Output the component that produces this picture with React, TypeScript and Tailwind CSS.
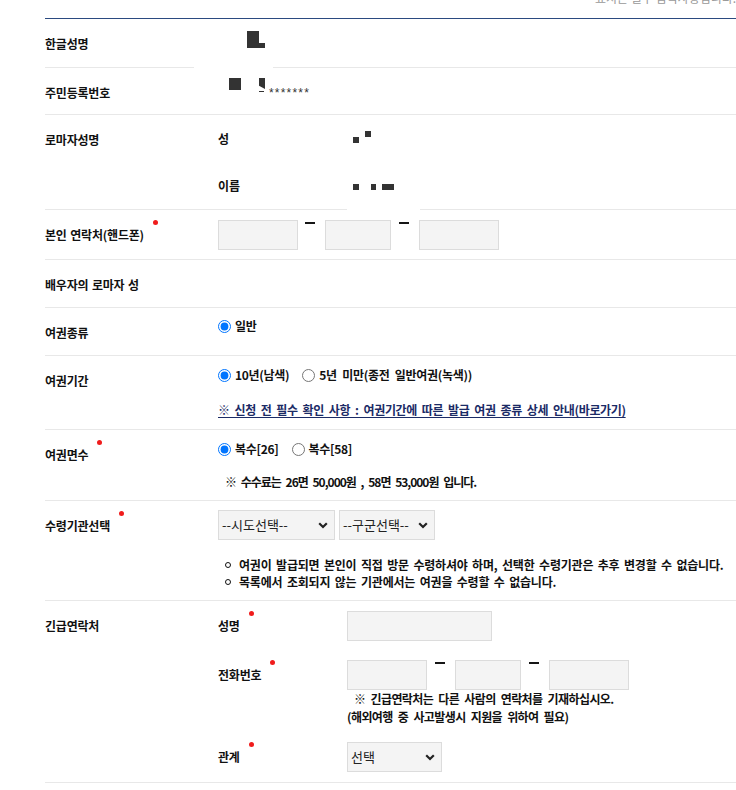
import React from "react";

const Dot = () => (
  <span className="absolute left-[calc(100%+9px)] top-[-7px] h-[5px] w-[5px] rounded-full bg-[#f01c1c]" />
);

function Label({ children, dot }: { children: React.ReactNode; dot?: boolean }) {
  return (
    <div className="w-[173px] shrink-0 pt-[16px]">
      <span className="relative inline-block leading-[16px] tracking-[-0.2px] [word-spacing:1px]">
        {children}
        {dot && <Dot />}
      </span>
    </div>
  );
}

function SubLabel({ children, dot }: { children: React.ReactNode; dot?: boolean }) {
  return (
    <div className="flex h-[30px] w-[129px] shrink-0 items-center">
      <span className="relative inline-block leading-[16px] tracking-[-0.2px]">
        {children}
        {dot && <Dot />}
      </span>
    </div>
  );
}

function Box({ w }: { w: string }) {
  return <div className={`h-[30px] shrink-0 border border-[#dcdcdc] bg-[#f4f4f4] ${w}`} />;
}

function Dash({ wide }: { wide?: boolean }) {
  return (
    <div className={wide ? "w-[28px] shrink-0 pl-[8px]" : "w-[27px] shrink-0 pl-[7px]"}>
      <div className="mt-[2px] h-[2px] w-[10px] bg-[#161616]" />
    </div>
  );
}

function Chevron() {
  return (
    <svg width="10" height="7" viewBox="0 0 10 7" className="shrink-0">
      <path d="M1.2 1.2 L5 5 L8.8 1.2" fill="none" stroke="#222" strokeWidth="2.2" />
    </svg>
  );
}

function Select({ text, w }: { text: string; w: string }) {
  return (
    <div
      className={`flex h-[30px] shrink-0 items-center justify-between border border-[#dcdcdc] bg-[#f4f4f4] pl-[3px] pr-[6px] text-[13px] font-normal tracking-normal text-[#222] [word-spacing:0px] ${w}`}
    >
      <span className="leading-[16px]">{text}</span>
      <Chevron />
    </div>
  );
}

function Radio({ name, checked, label }: { name: string; checked?: boolean; label: string }) {
  return (
    <label className="flex items-center">
      <input type="radio" name={name} defaultChecked={checked} className="m-0 h-[13px] w-[13px]" />
      <span className="ml-[4px] leading-[16px] tracking-[-0.3px]">{label}</span>
    </label>
  );
}

function Block({ c }: { c: string }) {
  return <div className={`shrink-0 bg-[#333] ${c}`} />;
}

export default function App() {
  return (
    <div className="h-[790px] w-[736px] overflow-hidden bg-white font-['Noto_Sans_CJK_KR',sans-serif] text-[12px] font-bold tracking-[0px] text-[#111] [word-spacing:3px]">
      <div className="h-[18px] overflow-hidden">
        <div className="mt-[-10px] whitespace-nowrap pl-[595px] text-[12px] font-normal leading-[16px] tracking-normal text-[#999] [word-spacing:0px]">
          표시는 필수 입력사항입니다.
        </div>
      </div>

      <div className="ml-[45px] border-t border-[#2b4a80]">
        {/* 한글성명 */}
        <div className="relative flex h-[49px] border-b border-[#e8e8e8]">
          <Label>한글성명</Label>
          <div className="flex items-end self-start pl-[29px] pt-[12px]">
            <Block c="h-[17px] w-[12px]" />
            <Block c="h-[5px] w-[6px]" />
          </div>
          <div className="absolute bottom-[-1px] left-[149px] h-[1px] w-[79px] bg-white" />
        </div>

        {/* 주민등록번호 */}
        <div className="flex h-[47px] border-b border-[#e8e8e8]">
          <Label>주민등록번호</Label>
          <div className="flex items-start pt-[10px]">
            <Block c="ml-[11px] h-[12px] w-[12px]" />
            <div className="ml-[18px] flex flex-col">
              <div className="h-[11px] w-[6px] bg-[#333] [clip-path:polygon(0_0,100%_0,100%_100%,0_70%,0_100%)]" />
              <div className="mt-[2px] h-[1px] w-[5px] bg-[#333]" />
            </div>
            <span className="ml-[4px] mt-[9px] font-['Liberation_Sans',sans-serif] text-[12px] font-normal leading-[12px] tracking-[1.2px] text-[#333]">
              *******
            </span>
          </div>
        </div>

        {/* 로마자성명 */}
        <div className="relative flex h-[95px] border-b border-[#e8e8e8]">
          <Label>로마자성명</Label>
          <div className="flex flex-col">
            <div className="flex h-[48px]">
              <div className="flex w-[129px] shrink-0 items-center">
                <span className="leading-[16px]">성</span>
              </div>
              <div className="flex items-start pt-[16px]">
                <Block c="ml-[6px] mt-[6px] h-[6px] w-[6px]" />
                <Block c="ml-[6px] h-[6px] w-[6px]" />
              </div>
            </div>
            <div className="flex h-[46px]">
              <div className="flex w-[129px] shrink-0 items-center">
                <span className="leading-[16px]">이름</span>
              </div>
              <div className="flex items-start pt-[21px]">
                <Block c="ml-[6px] h-[6px] w-[6px]" />
                <Block c="ml-[12px] h-[6px] w-[5px]" />
                <Block c="ml-[6px] h-[6px] w-[12px]" />
              </div>
            </div>
          </div>
          <div className="absolute bottom-[-1px] left-[302px] h-[1px] w-[73px] bg-white" />
        </div>

        {/* 본인 연락처 */}
        <div className="flex h-[50px] border-b border-[#e8e8e8]">
          <Label dot>본인 연락처(핸드폰)</Label>
          <div className="flex items-start pt-[10px]">
            <Box w="w-[80px]" />
            <Dash />
            <Box w="w-[66px]" />
            <Dash wide />
            <Box w="w-[80px]" />
          </div>
        </div>

        {/* 배우자 */}
        <div className="flex h-[48px] border-b border-[#e8e8e8]">
          <Label>배우자의 로마자 성</Label>
        </div>

        {/* 여권종류 */}
        <div className="flex h-[48px] border-b border-[#e8e8e8]">
          <Label>여권종류</Label>
          <div className="pt-[10px]">
            <div className="flex h-[16px] items-center">
              <Radio name="kind" checked label="일반" />
            </div>
          </div>
        </div>

        {/* 여권기간 */}
        <div className="flex h-[74px] border-b border-[#e8e8e8]">
          <Label>여권기간</Label>
          <div className="pt-[11px]">
            <div className="flex h-[16px] items-center gap-[13px]">
              <Radio name="period" checked label="10년(남색)" />
              <Radio name="period" label="5년 미만(종전 일반여권(녹색))" />
            </div>
            <div className="mt-[19px] leading-[16px] tracking-[-0.35px] [word-spacing:2.5px]">
              <a className="cursor-pointer text-[#1b2b66] underline underline-offset-[2px]">
                ※ 신청 전 필수 확인 사항 : 여권기간에 따른 발급 여권 종류 상세 안내(바로가기)
              </a>
            </div>
          </div>
        </div>

        {/* 여권면수 */}
        <div className="flex h-[71px] border-b border-[#e8e8e8]">
          <Label dot>여권면수</Label>
          <div className="pt-[11px]">
            <div className="flex h-[16px] items-center gap-[13px]">
              <Radio name="pages" checked label="복수[26]" />
              <Radio name="pages" label="복수[58]" />
            </div>
            <div className="mt-[17px] pl-[7px] leading-[16px] tracking-[-1px]">
              ※ 수수료는 26면 50,000원 , 58면 53,000원 입니다.
            </div>
          </div>
        </div>

        {/* 수령기관선택 */}
        <div className="flex h-[100px] border-b border-[#e8e8e8]">
          <Label dot>수령기관선택</Label>
          <div className="pt-[9px]">
            <div className="flex gap-[4px]">
              <Select text="--시도선택--" w="w-[117px]" />
              <Select text="--구군선택--" w="w-[96px]" />
            </div>
            <div className="mt-[16px] leading-[17px] tracking-[-0.2px] [word-spacing:2px]">
              <div className="flex items-center pl-[7px]">
                <span className="h-[6px] w-[6px] shrink-0 rounded-full border-[1.5px] border-[#111]" />
                <span className="ml-[8px] whitespace-nowrap">
                  여권이 발급되면 본인이 직접 방문 수령하셔야 하며, 선택한 수령기관은 추후 변경할 수 없습니다.
                </span>
              </div>
              <div className="flex items-center pl-[7px]">
                <span className="h-[6px] w-[6px] shrink-0 rounded-full border-[1.5px] border-[#111]" />
                <span className="ml-[8px] whitespace-nowrap">
                  목록에서 조회되지 않는 기관에서는 여권을 수령할 수 없습니다.
                </span>
              </div>
            </div>
          </div>
        </div>

        {/* 긴급연락처 */}
        <div className="flex h-[182px] border-b border-[#e8e8e8]">
          <Label>긴급연락처</Label>
          <div className="flex flex-col pt-[10px]">
            <div className="flex">
              <SubLabel dot>성명</SubLabel>
              <Box w="w-[145px]" />
            </div>
            <div className="mt-[19px] flex">
              <SubLabel dot>전화번호</SubLabel>
              <div>
                <div className="flex">
                  <Box w="w-[80px]" />
                  <Dash wide />
                  <Box w="w-[66px]" />
                  <Dash wide />
                  <Box w="w-[80px]" />
                </div>
                <div className="leading-[18px] tracking-[-0.6px]">
                  <div className="pl-[7px]">※ 긴급연락처는 다른 사람의 연락처를 기재하십시오.</div>
                  <div>(해외여행 중 사고발생시 지원을 위하여 필요)</div>
                </div>
              </div>
            </div>
            <div className="mt-[16px] flex">
              <SubLabel dot>관계</SubLabel>
              <Select text="선택" w="w-[95px]" />
            </div>
          </div>
        </div>
      </div>
    </div>
  );
}
